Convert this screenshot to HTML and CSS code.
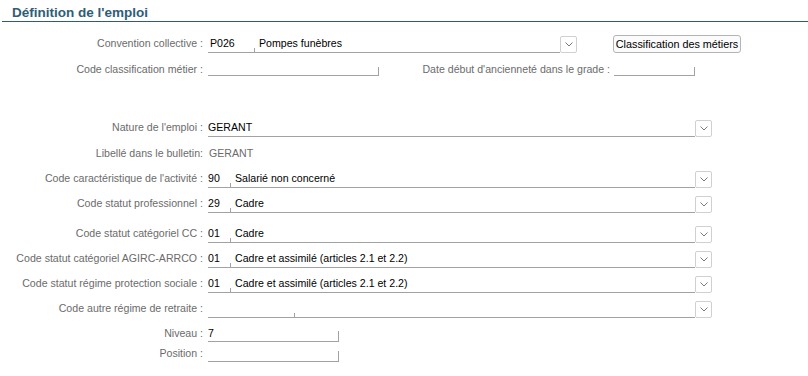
FILE: index.html
```html
<html>

<head>
  <meta charset="UTF-8">
  <title>Définition de l'emploi</title>
  <link rel="stylesheet" href="styles.css">
</head>

<body>
  <div class="Fiche">
    <h1 class="titre">Définition de l'emploi</h1>

    <div class="ligne h26">
      <span class="lib">Convention collective :</span>
      <div class="combo w352">
        <span class="code c47">P026</span>
        <span class="desc">Pompes funèbres</span>
      </div>
      <span class="fleche"><svg width="8" height="5" viewBox="0 0 8 5"><polyline points="0.5,0.5 4,4 7.5,0.5" fill="none" stroke="#7a7a7a" stroke-width="1"/></svg></span>
      <button class="bouton">Classification des métiers</button>
    </div>

    <div class="ligne h58">
      <span class="lib">Code classification métier :</span>
      <span class="saisie w171 tick8"></span>
      <span class="lib-date">Date début d'ancienneté dans le grade :</span>
      <span class="saisie w81 tick8"></span>
    </div>

    <div class="ligne h26">
      <span class="lib">Nature de l'emploi :</span>
      <div class="combo w487">
        <span class="desc sans-code">GERANT</span>
      </div>
      <span class="fleche"><svg width="8" height="5" viewBox="0 0 8 5"><polyline points="0.5,0.5 4,4 7.5,0.5" fill="none" stroke="#7a7a7a" stroke-width="1"/></svg></span>
    </div>

    <div class="ligne h25">
      <span class="lib">Libellé dans le bulletin:</span>
      <span class="valeur">GERANT</span>
    </div>

    <div class="ligne h25">
      <span class="lib">Code caractéristique de l'activité :</span>
      <div class="combo w487">
        <span class="code c23">90</span>
        <span class="desc">Salarié non concerné</span>
      </div>
      <span class="fleche"><svg width="8" height="5" viewBox="0 0 8 5"><polyline points="0.5,0.5 4,4 7.5,0.5" fill="none" stroke="#7a7a7a" stroke-width="1"/></svg></span>
    </div>

    <div class="ligne h30">
      <span class="lib">Code statut professionnel :</span>
      <div class="combo w487">
        <span class="code c23">29</span>
        <span class="desc">Cadre</span>
      </div>
      <span class="fleche"><svg width="8" height="5" viewBox="0 0 8 5"><polyline points="0.5,0.5 4,4 7.5,0.5" fill="none" stroke="#7a7a7a" stroke-width="1"/></svg></span>
    </div>

    <div class="ligne h25">
      <span class="lib">Code statut catégoriel CC :</span>
      <div class="combo w487">
        <span class="code c23">01</span>
        <span class="desc">Cadre</span>
      </div>
      <span class="fleche"><svg width="8" height="5" viewBox="0 0 8 5"><polyline points="0.5,0.5 4,4 7.5,0.5" fill="none" stroke="#7a7a7a" stroke-width="1"/></svg></span>
    </div>

    <div class="ligne h25">
      <span class="lib">Code statut catégoriel AGIRC-ARRCO :</span>
      <div class="combo w487">
        <span class="code c23">01</span>
        <span class="desc">Cadre et assimilé (articles 2.1 et 2.2)</span>
      </div>
      <span class="fleche"><svg width="8" height="5" viewBox="0 0 8 5"><polyline points="0.5,0.5 4,4 7.5,0.5" fill="none" stroke="#7a7a7a" stroke-width="1"/></svg></span>
    </div>

    <div class="ligne h25">
      <span class="lib">Code statut régime protection sociale :</span>
      <div class="combo w487">
        <span class="code c23">01</span>
        <span class="desc">Cadre et assimilé (articles 2.1 et 2.2)</span>
      </div>
      <span class="fleche"><svg width="8" height="5" viewBox="0 0 8 5"><polyline points="0.5,0.5 4,4 7.5,0.5" fill="none" stroke="#7a7a7a" stroke-width="1"/></svg></span>
    </div>

    <div class="ligne h25">
      <span class="lib">Code autre régime de retraite :</span>
      <div class="combo w487">
        <span class="code c87"></span>
        <span class="desc"></span>
      </div>
      <span class="fleche"><svg width="8" height="5" viewBox="0 0 8 5"><polyline points="0.5,0.5 4,4 7.5,0.5" fill="none" stroke="#7a7a7a" stroke-width="1"/></svg></span>
    </div>

    <div class="ligne h20">
      <span class="lib">Niveau :</span>
      <span class="saisie w131 haut">7</span>
    </div>

    <div class="ligne h20">
      <span class="lib">Position :</span>
      <span class="saisie w131 haut"></span>
    </div>
  </div>
</body>

</html>
```

FILE: styles.css
```css
body {
  margin: 0;
  padding: 0;
  background: #ffffff;
}

.Fiche {
  font-family: "Liberation Sans", Arial, sans-serif;
  font-size: 10.6px;
  color: #000000;
}

.titre {
  font-size: 13.5px;
  font-weight: bold;
  color: #2f5d76;
  margin: 0 0 13px 2px;
  padding: 5px 0 0 10px;
  height: 16px;
  line-height: 16px;
  border-bottom: 1px solid #2f5d76;
}

.ligne {
  display: flex;
  align-items: flex-start;
}

.h20 { height: 20px; }
.h25 { height: 25px; }
.h26 { height: 26px; }
.h30 { height: 30px; }
.h58 { height: 58px; }

.lib {
  width: 203px;
  margin-right: 5px;
  text-align: right;
  color: #6b6b6b;
  line-height: 16px;
  white-space: nowrap;
}

.lib-date {
  width: 231px;
  margin-right: 4px;
  text-align: right;
  color: #6b6b6b;
  line-height: 16px;
  white-space: nowrap;
}

.valeur {
  color: #6b6b6b;
  line-height: 16px;
  padding-left: 1px;
}

.combo {
  display: flex;
  height: 17px;
  border-bottom: 1px solid #a2a2a2;
  line-height: 16px;
}

.w352 { width: 352px; }
.w487 { width: 487px; }

.code {
  height: 17px;
  padding-left: 2px;
  box-sizing: border-box;
  background: linear-gradient(#a2a2a2, #a2a2a2) right bottom / 1px 4px no-repeat;
}

.c23 { width: 23px; padding-left: 0; }
.c47 { width: 47px; }
.c87 { width: 87px; }

.desc {
  flex: 1;
  padding-left: 4px;
  white-space: nowrap;
  overflow: hidden;
}

.sans-code {
  padding-left: 0;
}

.fleche {
  width: 17px;
  height: 17px;
  border: 1px solid #d0d0d0;
  border-radius: 2px;
  box-sizing: border-box;
  margin-top: 1px;
  display: flex;
  align-items: center;
  justify-content: center;
}

.bouton {
  margin-left: 36px;
  width: 128px;
  height: 18px;
  padding: 0;
  font-family: "Liberation Sans", Arial, sans-serif;
  font-size: 10.8px;
  color: #000000;
  background: #fbfbfb;
  border: 1px solid #b4b4b4;
  border-radius: 3px;
}

.saisie {
  display: block;
  height: 14px;
  line-height: 16px;
  border-bottom: 1px solid #a2a2a2;
  background: linear-gradient(#a2a2a2, #a2a2a2) right bottom / 1px 10px no-repeat;
}

.saisie.tick8 {
  background-size: 1px 8px;
}

.saisie.haut {
  height: 16px;
}

.w171 { width: 171px; }
.w81 { width: 81px; }
.w131 { width: 131px; }
```
